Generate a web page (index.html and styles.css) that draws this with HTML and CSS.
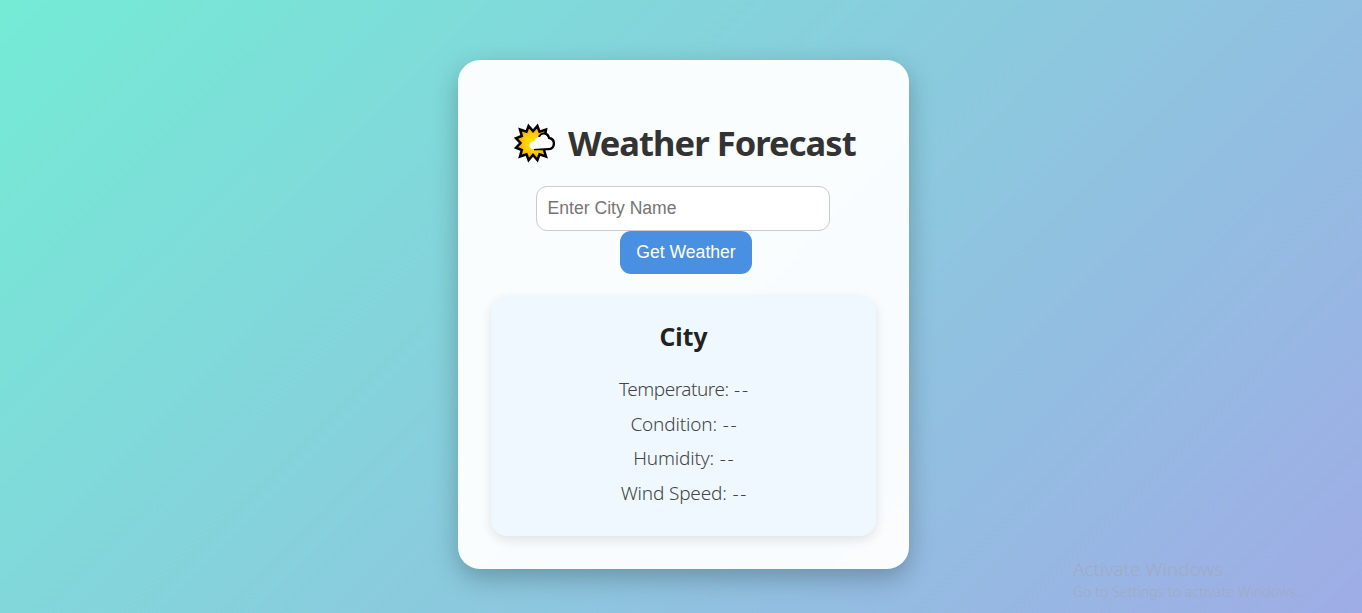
FILE: index.html
```html
<!DOCTYPE html>
<html lang="en">
<head>
<meta charset="utf-8">
<title>Weather Forecast</title>
<link rel="stylesheet" href="styles.css">
</head>
<body>
<main class="container">
<h1><svg class="sun" viewBox="0 0 40 40"><defs><radialGradient id="g"><stop offset="0" stop-color="#ffe600"/><stop offset=".5" stop-color="#ffcf0a"/><stop offset="1" stop-color="#f8a000"/></radialGradient></defs><path d="M14.6 3L19 8L23.4 3L25.5 8.7L32 6.5L31 13L36 19L36 24L30 27L32 33.5L25.5 31.3L23.4 37L19 32L14.6 37L12.5 31.3L6 33.5L7.8 27L2 24.7L6.5 20L2 15.3L7.8 13L6 6.5L12.5 8.7Z" fill="url(#g)" stroke="#000" stroke-width="2.5"/><path d="M25 14C28 9 34 10 35 15C42 16 41 26 35 26L20 26" fill="#fff" stroke="#000" stroke-width="2.4"/><path d="M19 26C14 26 14 18 20 18.5C22 14 25 14 26 14C28 10 33 11 34 16C40 17 39 25 34 25Z" fill="#fff"/></svg><span class="title">Weather Forecast</span></h1>
<input class="city-input" type="text" placeholder="Enter City Name">
<button class="submit">Get Weather</button>
<section class="card">
<h2>City</h2>
<p class="temperature">Temperature: <span class="value">--</span></p>
<p>Condition: <span class="value">--</span></p>
<p>Humidity: <span class="value">--</span></p>
<p>Wind Speed: <span class="value">--</span></p>
</section>
</main>
<aside class="watermark"><div class="wm-title">Activate Windows</div><div class="wm-text">Go to Settings to activate Windows.</div></aside>
</body>
</html>
```
FILE: styles.css
```css
* { box-sizing: border-box; }
body { margin: 0; height: 613px; overflow: hidden; padding: 60px 0 0 458px; font-family: "Noto Sans", "Open Sans", sans-serif; background: linear-gradient(135deg, #74ebd5, #9face6); }
.container { width: 451px; height: 509px; padding: 56px 33px 33px; border-radius: 22px; background: rgba(255,255,255,.95); box-shadow: 0 9px 26px rgba(0,0,0,.25); display: flex; flex-direction: column; align-items: center; }
h1 { margin: 0; height: 53px; width: 341px; display: flex; align-items: center; gap: 14px; color: #333; font-size: 34.5px; line-height: 53px; white-space: nowrap; }
.sun { width: 40px; height: 40px; flex: none; margin-left: 1px; overflow: visible; }
.title { letter-spacing: -.95px; }
.city-input { margin: 17px 2px 0 0; width: 294px; height: 45px; flex: none; border: 1px solid #ccc; border-radius: 11px; padding: 0 11px; font: 17.6px "Liberation Sans", Arial, sans-serif; }
.submit { width: 132px; height: 43px; flex: none; margin-left: 5px; border: 0; border-radius: 11px; padding: 0; background: #4a90e2; color: #fff; font: 17.6px "Liberation Sans", Arial, sans-serif; }
.card { width: 385px; height: 240px; margin-top: 22px; border-radius: 16px; background: #f0f8ff; box-shadow: 0 4px 12px rgba(0,0,0,.1); text-align: center; padding-top: 22px; }
h2 { margin: 0 0 16px; font-size: 24.6px; line-height: 38px; color: #222; }
p { margin: 0; font-size: 19px; font-weight: 350; line-height: 34.7px; color: #444; letter-spacing: -.18px; }
.temperature { letter-spacing: -.48px; }
.value { letter-spacing: 1.7px; margin: 0 -1.7px 0 1px; }
.watermark { position: absolute; left: 1073px; top: 556px; color: #a1abc2; white-space: nowrap; }
.wm-title { font-size: 19px; font-weight: 350; line-height: 26px; }
.wm-text { font-size: 14px; font-weight: 350; line-height: 20px; letter-spacing: .08px; }
```
